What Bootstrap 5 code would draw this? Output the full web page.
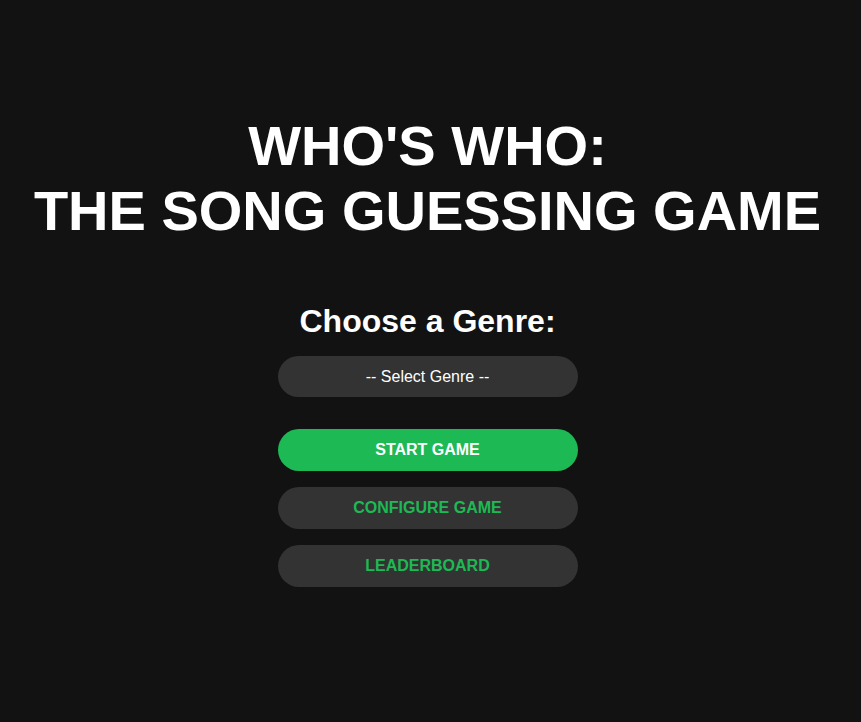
<!DOCTYPE html>
<html lang="en">
<head>
<meta charset="utf-8">
<meta name="viewport" content="width=device-width, initial-scale=1">
<title>Who's Who: The Song Guessing Game</title>
<link href="https://cdn.jsdelivr.net/npm/bootstrap@5.3.0/dist/css/bootstrap.min.css" rel="stylesheet">
<style>
body { background: #121212; color: #fff; font-family: "Liberation Sans", Arial, sans-serif; }
.home { padding: 0 6px 22px 0; }
.game-title { font-size: 56px; line-height: 65px; margin-bottom: 60px; }
.genre-label { font-size: 32px; line-height: 37px; margin-bottom: 16px; }
.controls { width: 300px; max-width: 100%; }
.genre-select { height: 41px; margin-bottom: 32px; background: #333; color: #fff; text-align: center; text-align-last: center; appearance: none; }
.game-btn { --bs-btn-color: #1db954; --bs-btn-bg: #333; --bs-btn-hover-color: #1db954; --bs-btn-hover-bg: #404040; height: 42px; border: 0; }
.start-btn { --bs-btn-color: #fff; --bs-btn-bg: #1db954; --bs-btn-hover-color: #fff; --bs-btn-hover-bg: #1ed760; }
</style>
</head>
<body>
<main class="home min-vh-100 d-flex flex-column align-items-center justify-content-center text-center">
  <h1 class="game-title fw-bold text-uppercase">Who's Who:<br>The Song Guessing Game</h1>
  <label for="genre" class="genre-label fw-bold">Choose a Genre:</label>
  <div class="controls">
    <select id="genre" class="genre-select w-100 border-0 rounded-pill px-3">
      <option>-- Select Genre --</option>
    </select>
    <div class="d-grid gap-3">
      <button type="button" class="btn game-btn start-btn rounded-pill fw-bold text-uppercase">Start Game</button>
      <button type="button" class="btn game-btn rounded-pill fw-bold text-uppercase">Configure Game</button>
      <button type="button" class="btn game-btn rounded-pill fw-bold text-uppercase">Leaderboard</button>
    </div>
  </div>
</main>
<script src="https://cdn.jsdelivr.net/npm/bootstrap@5.3.0/dist/js/bootstrap.bundle.min.js"></script>
</body>
</html>
